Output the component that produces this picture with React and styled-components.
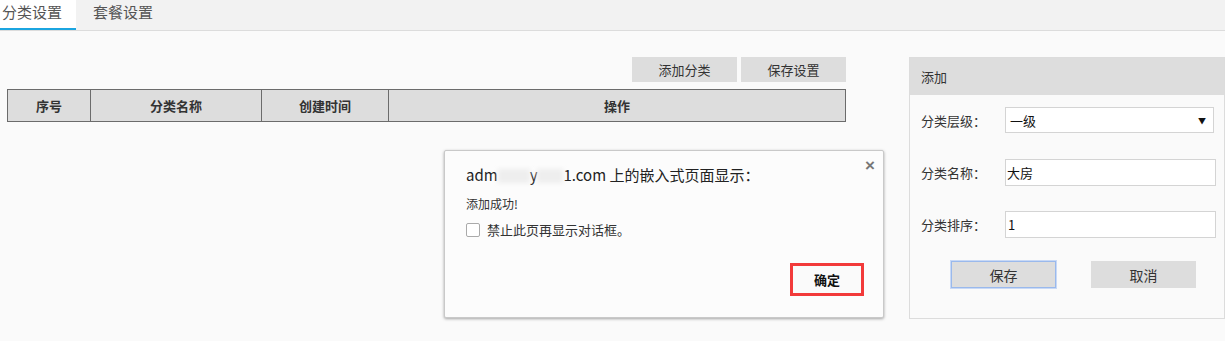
import React from 'react';
import styled, { createGlobalStyle } from 'styled-components';

const GlobalStyle = createGlobalStyle`
  html, body {
    margin: 0;
    padding: 0;
    background: #fafafa;
    font-family: "Noto Sans CJK SC", "Noto Sans", "Liberation Sans", sans-serif;
    color: #333;
  }
`;

const Page = styled.div`
  position: relative;
  width: 1225px;
  height: 341px;
  overflow: hidden;
  background: #fafafa;
`;

const TabBar = styled.div`
  display: flex;
  height: 30px;
  background: #f2f2f2;
  border-bottom: 1px solid #dcdcdc;
`;

const Tab = styled.div`
  width: 76px;
  box-sizing: border-box;
  padding-left: ${p => (p.active ? '2px' : '17px')};
  font-size: 15px;
  line-height: 24px;
  color: #555;
  white-space: nowrap;
  background: ${p => (p.active ? '#fff' : 'transparent')};
  border-bottom: 2px solid ${p => (p.active ? '#1ba5e0' : 'transparent')};
  height: 30px;
`;

const Body = styled.div`
  display: flex;
  align-items: flex-start;
  padding-top: 26px;
`;

const Left = styled.div`
  width: 839px;
  margin-left: 7px;
`;

const Toolbar = styled.div`
  display: flex;
  justify-content: flex-end;
  gap: 4px;
  margin-bottom: 7px;
`;

const GreyButton = styled.button`
  width: ${p => p.w || 105}px;
  height: 25px;
  border: none;
  background: #dddddd;
  font-family: inherit;
  font-size: 13px;
  color: #333;
  padding: 0;
`;

const Table = styled.table`
  width: 839px;
  border-collapse: collapse;
  background: #dddddd;
  th {
    height: 31px;
    border: 1px solid #6b6b6b;
    font-size: 13px;
    font-weight: bold;
    color: #333;
    padding: 0;
  }
`;

const Panel = styled.div`
  margin-left: 63px;
  width: 330px;
  height: 262px;
  border: 1px solid #dcdcdc;
  box-sizing: border-box;
  background: #fafafa;
`;

const PanelHead = styled.div`
  height: 37px;
  background: #dddddd;
  font-size: 13px;
  line-height: 37px;
  padding-left: 11px;
  color: #333;
`;

const Form = styled.div`
  padding: 12px 0 0 11px;
`;

const Row = styled.div`
  display: flex;
  align-items: center;
  height: 26px;
  margin-bottom: ${p => p.mb || 26}px;
`;

const Label = styled.div`
  width: 84px;
  font-size: 13px;
  color: #333;
`;

const Field = styled.div`
  width: ${p => p.w || 211}px;
  height: ${p => p.h || 27}px;
  box-sizing: border-box;
  border: 1px solid #d4d4d4;
  background: #fff;
  display: flex;
  align-items: center;
  justify-content: space-between;
  padding: 0 7px 0 ${p => p.pl || 1}px;
  font-size: 13px;
  color: #111;
`;

const Caret = styled.span`
  font-size: 8px;
  color: #111;
`;

const Actions = styled.div`
  display: flex;
  gap: 35px;
  padding-left: 30px;
  margin-top: 0;
`;

const PanelButton = styled.button`
  width: 105px;
  height: 27px;
  box-sizing: border-box;
  border: ${p => (p.focus ? '1px solid #9ab9ec' : 'none')};
  box-shadow: ${p => (p.focus ? '0 0 0 1px #c8d9f6' : 'none')};
  background: #dddddd;
  font-family: inherit;
  font-size: 14px;
  color: #333;
  padding: 0;
`;

const Dialog = styled.div`
  position: absolute;
  left: 444px;
  top: 150px;
  width: 440px;
  height: 168px;
  box-sizing: border-box;
  background: #fcfcfc;
  border: 1px solid #c9c9c9;
  border-radius: 2px;
  box-shadow: 0 1px 3px rgba(0, 0, 0, 0.35);
  padding: 12px 0 0 21px;
`;

const Close = styled.div`
  position: absolute;
  right: 8px;
  top: 5px;
  font-family: "Liberation Sans", sans-serif;
  font-size: 17px;
  font-weight: bold;
  color: #777;
`;

const Title = styled.div`
  font-size: 15px;
  line-height: 24px;
  color: #222;
`;

const Blur = styled.span`
  display: inline-block;
  width: ${p => p.w}px;
  height: 14px;
  vertical-align: -2px;
  background: #eeeeee;
  filter: blur(2px);
`;

const Message = styled.div`
  margin-top: 8px;
  font-size: 12px;
  color: #333;
`;

const Check = styled.label`
  display: flex;
  align-items: center;
  gap: 7px;
  margin-top: 8px;
  font-size: 13px;
  color: #333;
`;

const Box = styled.span`
  width: 12px;
  height: 12px;
  border: 1px solid #aaa;
  border-radius: 2px;
  background: #fff;
`;

const Footer = styled.div`
  display: flex;
  justify-content: flex-end;
  padding-right: 19px;
  margin-top: 24px;
`;

const OkButton = styled.button`
  width: 74px;
  height: 33px;
  box-sizing: border-box;
  border: 3px solid #f23a3a;
  background: #fafafa;
  font-family: inherit;
  font-size: 13px;
  font-weight: bold;
  color: #111;
  padding: 0;
`;

export default function App() {
  return (
    <Page>
      <GlobalStyle />
      <TabBar>
        <Tab active>分类设置</Tab>
        <Tab>套餐设置</Tab>
      </TabBar>
      <Body>
        <Left>
          <Toolbar>
            <GreyButton>添加分类</GreyButton>
            <GreyButton>保存设置</GreyButton>
          </Toolbar>
          <Table>
            <thead>
              <tr>
                <th style={{ width: 82 }}>序号</th>
                <th style={{ width: 170 }}>分类名称</th>
                <th style={{ width: 126 }}>创建时间</th>
                <th>操作</th>
              </tr>
            </thead>
          </Table>
        </Left>
        <Panel>
          <PanelHead>添加</PanelHead>
          <Form>
            <Row>
              <Label>分类层级：</Label>
              <Field w={209} h={26} pl={4}>
                一级<Caret>▼</Caret>
              </Field>
            </Row>
            <Row>
              <Label>分类名称：</Label>
              <Field>大房</Field>
            </Row>
            <Row mb={24}>
              <Label>分类排序：</Label>
              <Field pl={2}>1</Field>
            </Row>
            <Actions>
              <PanelButton focus>保存</PanelButton>
              <PanelButton>取消</PanelButton>
            </Actions>
          </Form>
        </Panel>
      </Body>
      <Dialog>
        <Close>×</Close>
        <Title>
          adm<Blur w={32} />y<Blur w={26} />1.com 上的嵌入式页面显示：
        </Title>
        <Message>添加成功!</Message>
        <Check>
          <Box />
          禁止此页再显示对话框。
        </Check>
        <Footer>
          <OkButton>确定</OkButton>
        </Footer>
      </Dialog>
    </Page>
  );
}
